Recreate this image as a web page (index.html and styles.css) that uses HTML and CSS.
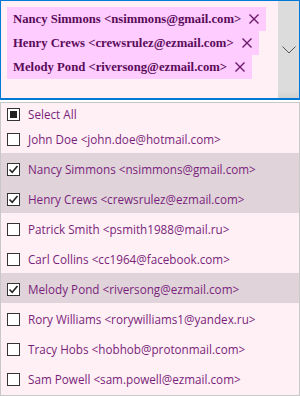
FILE: index.html
```html
<!DOCTYPE html>
<html lang="en">
<head>
    <meta charset="UTF-8">
    <title>recipients</title>
    <link rel="stylesheet" href="styles.css">
</head>
<body>
<div class="picker">
    <div class="field">
        <div class="tags">
            <span class="tag">Nancy Simmons &lt;nsimmons@gmail.com&gt;<svg class="remove" width="10" height="10" viewBox="0 0 10 10"><path d="M0.5 0.5 L9.5 9.5 M9.5 0.5 L0.5 9.5" stroke="#6a1a6a" stroke-width="1.4"/></svg></span>
            <span class="tag">Henry Crews &lt;crewsrulez@ezmail.com&gt;<svg class="remove" width="10" height="10" viewBox="0 0 10 10"><path d="M0.5 0.5 L9.5 9.5 M9.5 0.5 L0.5 9.5" stroke="#6a1a6a" stroke-width="1.4"/></svg></span>
            <span class="tag">Melody Pond &lt;riversong@ezmail.com&gt;<svg class="remove" width="10" height="10" viewBox="0 0 10 10"><path d="M0.5 0.5 L9.5 9.5 M9.5 0.5 L0.5 9.5" stroke="#6a1a6a" stroke-width="1.4"/></svg></span>
        </div>
        <div class="toggle">
            <svg width="14" height="8" viewBox="0 0 14 8"><path d="M0.5 0.5 L7 7 L13.5 0.5" fill="none" stroke="#555" stroke-width="1"/></svg>
        </div>
    </div>
    <ul class="options">
        <li class="option selectAll"><span class="box partial"></span>Select All</li>
        <li class="option"><span class="box"></span>John Doe &lt;john.doe@hotmail.com&gt;</li>
        <li class="option checked"><span class="box"><svg width="11" height="11" viewBox="0 0 11 11"><path d="M1.5 5.5 L4.2 8.2 L9.5 2" fill="none" stroke="#222" stroke-width="1.6"/></svg></span>Nancy Simmons &lt;nsimmons@gmail.com&gt;</li>
        <li class="option checked"><span class="box"><svg width="11" height="11" viewBox="0 0 11 11"><path d="M1.5 5.5 L4.2 8.2 L9.5 2" fill="none" stroke="#222" stroke-width="1.6"/></svg></span>Henry Crews &lt;crewsrulez@ezmail.com&gt;</li>
        <li class="option"><span class="box"></span>Patrick Smith &lt;psmith1988@mail.ru&gt;</li>
        <li class="option"><span class="box"></span>Carl Collins &lt;cc1964@facebook.com&gt;</li>
        <li class="option checked"><span class="box"><svg width="11" height="11" viewBox="0 0 11 11"><path d="M1.5 5.5 L4.2 8.2 L9.5 2" fill="none" stroke="#222" stroke-width="1.6"/></svg></span>Melody Pond &lt;riversong@ezmail.com&gt;</li>
        <li class="option"><span class="box"></span>Rory Williams &lt;rorywilliams1@yandex.ru&gt;</li>
        <li class="option"><span class="box"></span>Tracy Hobs &lt;hobhob@protonmail.com&gt;</li>
        <li class="option"><span class="box"></span>Sam Powell &lt;sam.powell@ezmail.com&gt;</li>
    </ul>
</div>
</body>
</html>
```

FILE: styles.css
```css
body {
    margin: 0;
    padding: 0;
    background-color: #ffffff;
}
.picker {
    width: 300px;
}
.field {
    display: flex;
    height: 100px;
    box-sizing: border-box;
    border: solid 1px #0078d7;
    border-bottom-width: 2px;
    background-color: #fff0f5;
}
.tags {
    flex: 1;
    display: flex;
    flex-direction: column;
    align-items: flex-start;
    padding: 6px 0 0 6px;
}
.tag {
    display: flex;
    align-items: center;
    height: 24px;
    padding: 0 7px 0 6px;
    background-color: #ffccff;
    color: #5a0a5a;
    font-family: "Liberation Serif", serif;
    font-weight: bold;
    font-size: 12.7px;
    white-space: nowrap;
}
.remove {
    margin-left: 8px;
    flex-shrink: 0;
}
.toggle {
    width: 21px;
    flex-shrink: 0;
    display: flex;
    align-items: center;
    justify-content: center;
    background: linear-gradient(#dcdcdc 92%, #d2d2d2);
}
.options {
    list-style-type: none;
    margin: 2px 0 0 0;
    padding: 0;
    height: 294px;
    box-sizing: border-box;
    border: solid 1px #c8c8c8;
    background-color: #fff0f5;
    font-family: "Open Sans", sans-serif;
    font-size: 11.7px;
    color: #7a1f7a;
    overflow: hidden;
}
.option {
    display: flex;
    align-items: center;
    height: 30px;
    box-sizing: border-box;
    padding: 2px 0 0 6px;
    white-space: nowrap;
}
.selectAll {
    height: 20px;
}
.checked {
    background-color: #e0d4da;
}
.box {
    width: 11px;
    height: 11px;
    border: solid 1px #333333;
    background-color: #ffffff;
    margin-right: 8px;
    display: flex;
    align-items: center;
    justify-content: center;
}
.partial::after {
    content: "";
    width: 7px;
    height: 7px;
    background-color: #222222;
}
```
